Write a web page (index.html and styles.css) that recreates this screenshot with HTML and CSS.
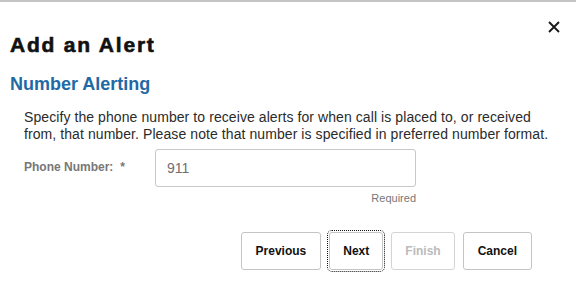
FILE: index.html
```html
<!DOCTYPE html>
<html>
<head>
<meta charset="utf-8">
<link rel="stylesheet" href="styles.css">
</head>
<body>
<div class="dialog">
  <div class="header">
    <h1 class="title">Add an Alert</h1>
    <button class="close" aria-label="Close">
      <svg width="12" height="12" viewBox="0 0 12 12"><path d="M1 1 L11 11 M11 1 L1 11" stroke="#1a1a1a" stroke-width="1.9" fill="none"/></svg>
    </button>
  </div>
  <h2 class="subtitle">Number Alerting</h2>
  <p class="desc">Specify the phone number to receive alerts for when call is placed to, or received from, that number. Please note that number is specified in preferred number format.</p>
  <div class="field">
    <label class="label">Phone Number:<span class="req">*</span></label>
    <div class="control">
      <div class="input">911</div>
      <div class="hint">Required</div>
    </div>
  </div>
  <div class="actions">
    <button class="btn">Previous</button>
    <button class="btn focused">Next</button>
    <button class="btn disabled">Finish</button>
    <button class="btn">Cancel</button>
  </div>
</div>
</body>
</html>
```
FILE: styles.css
```css
html, body {
  margin: 0;
  padding: 0;
  background: #fff;
}
body {
  font-family: "Liberation Sans", Arial, sans-serif;
  color: #333;
}
.dialog {
  width: 576px;
  height: 284px;
  box-sizing: border-box;
  border-top: 2px solid #c4c4c4;
}
.header {
  display: flex;
  justify-content: space-between;
  align-items: flex-start;
  padding: 0 16px 0 10px;
}
.title {
  margin: 29px 0 0;
  font-size: 21px;
  line-height: 28px;
  font-weight: bold;
  color: #111;
  letter-spacing: 1.8px;
  -webkit-text-stroke: 0.6px #111;
}
.close {
  margin-top: 19px;
  padding: 0;
  border: 0;
  background: none;
  width: 12px;
  height: 12px;
  display: flex;
}
.subtitle {
  margin: 14px 0 0 10px;
  font-size: 18px;
  line-height: 22px;
  font-weight: bold;
  color: #1f6aa5;
}
.desc {
  margin: 14px 10px 0 24px;
  font-size: 14px;
  line-height: 17px;
  letter-spacing: 0.08px;
  color: #2b2b2b;
}
.field {
  display: flex;
  margin: 6px 0 0 24px;
}
.label {
  width: 131px;
  padding-top: 11px;
  font-size: 12px;
  font-weight: bold;
  color: #777;
}
.req {
  margin-left: 7px;
}
.control {
  display: flex;
  flex-direction: column;
  align-items: flex-end;
  width: 261px;
}
.input {
  box-sizing: border-box;
  width: 261px;
  height: 38px;
  border: 1px solid #c8c8c8;
  border-radius: 3px;
  padding: 10px 11px;
  font-size: 14px;
  line-height: 16px;
  color: #6f6f6f;
}
.hint {
  margin-top: 4px;
  font-size: 11px;
  line-height: 14px;
  color: #777;
}
.actions {
  display: flex;
  justify-content: flex-end;
  gap: 8px;
  padding-right: 44px;
  margin-top: 27px;
}
.btn {
  height: 38px;
  padding: 0 14px;
  border: 1px solid #c4c4c4;
  border-radius: 3px;
  background: #fff;
  font-family: "Liberation Sans", Arial, sans-serif;
  font-size: 12px;
  font-weight: bold;
  color: #111;
}
.btn.focused {
  outline: 1px dotted #111;
  outline-offset: 1px;
  padding: 0 13px;
}
.btn.disabled {
  color: #bbb;
  border-color: #d4d4d4;
  padding: 0 13px;
}
```
